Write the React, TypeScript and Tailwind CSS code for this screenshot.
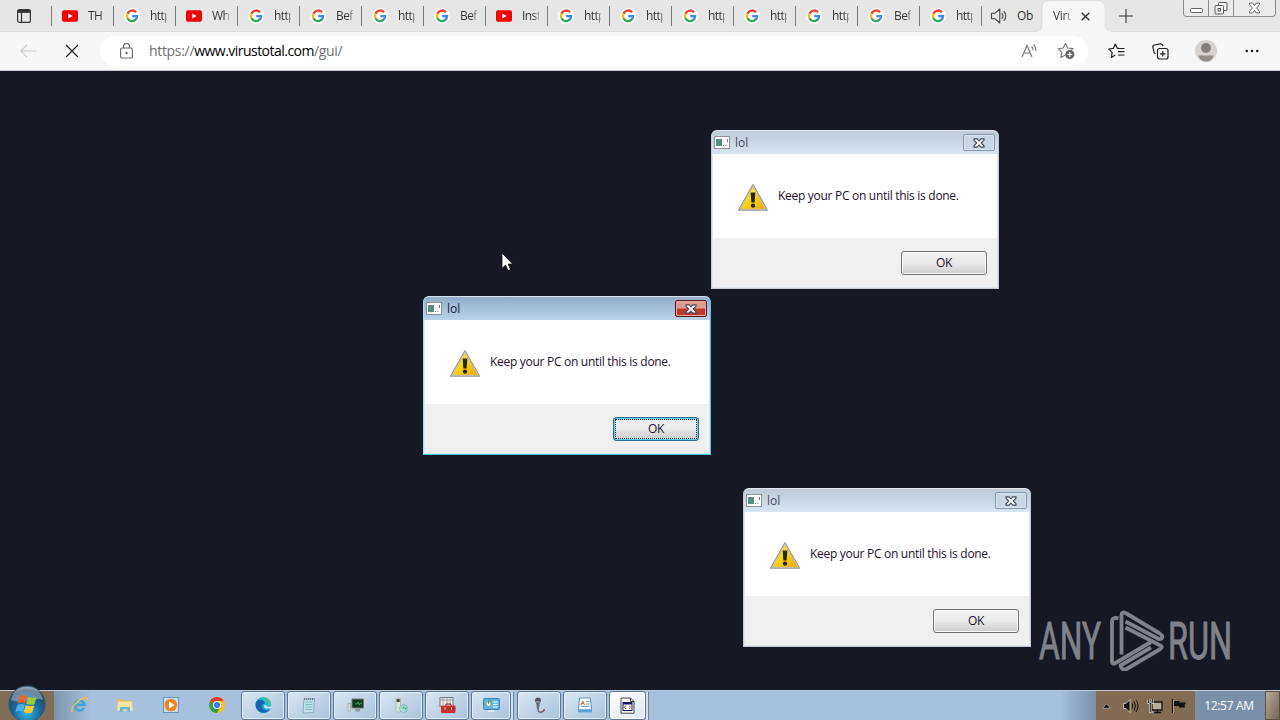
import React from "react";

function GoogleIcon() {
  return (
    <svg width="16" height="16" viewBox="0 0 16 16" className="block shrink-0">
      <circle cx="8" cy="8" r="8" fill="#fff" />
      <g fill="none" strokeWidth="2.3">
        <path d="M12.1 4.3A5.1 5.1 0 0 0 3.5 5.7" stroke="#ea4335" />
        <path d="M3.5 5.6A5.1 5.1 0 0 0 3.5 10.5" stroke="#fbbc05" />
        <path d="M3.5 10.3A5.1 5.1 0 0 0 11.6 11.7" stroke="#34a853" />
        <path d="M11.4 11.9A5.1 5.1 0 0 0 13.1 8.2H8.2" stroke="#4285f4" />
      </g>
    </svg>
  );
}

function YouTubeIcon() {
  return (
    <svg width="16" height="16" viewBox="0 0 16 16" className="block shrink-0">
      <rect x="0" y="2.3" width="16" height="11.4" rx="2" fill="#f50000" />
      <path d="M6.3 5.5v5L10.8 8z" fill="#fff" />
    </svg>
  );
}

function SpeakerIcon() {
  return (
    <svg width="18" height="18" viewBox="0 0 18 18" fill="none" stroke="#444" strokeWidth="1.1" className="block shrink-0">
      <path d="M1.5 6.2h3.6L9.8 2v14l-4.700-4.200H1.500z" strokeLinejoin="round" />
      <path d="M12 6.500a4 4 0 0 1 0 5M14 4.500a6.500 6.500 0 0 1 0 9" strokeLinecap="round" />
    </svg>
  );
}

const tabs: { icon: "yt" | "g"; text: string }[] = [
  { icon: "yt", text: "TH" },
  { icon: "g", text: "http" },
  { icon: "yt", text: "Wh" },
  { icon: "g", text: "http" },
  { icon: "g", text: "Bef" },
  { icon: "g", text: "http" },
  { icon: "g", text: "Bef" },
  { icon: "yt", text: "Inst" },
  { icon: "g", text: "http" },
  { icon: "g", text: "http" },
  { icon: "g", text: "http" },
  { icon: "g", text: "http" },
  { icon: "g", text: "http" },
  { icon: "g", text: "Bef" },
  { icon: "g", text: "http" },
];

function TabStrip() {
  return (
    <div className="flex h-8 shrink-0 items-start border-b border-[#dcdcdc] bg-[#e6e6e6] text-[12px] text-[#333]">
      <div className="flex h-8 w-[51px] shrink-0 items-center pl-[17px]">
        <svg width="14" height="14" viewBox="0 0 14 14" fill="none" stroke="#333" strokeWidth="1.200">
          <rect x=".6" y=".6" width="12.800" height="12.800" rx="2" />
          <path d="M.6 2.400h12.800" strokeWidth="3" />
          <path d="M4.500 3v10" />
        </svg>
      </div>
      {tabs.map((t, i) => (
        <div key={i} className="flex h-8 w-[62px] shrink-0 items-center">
          <div className="h-5 w-px bg-[#7c7c7c]" />
          <div className="ml-[10px]">{t.icon === "yt" ? <YouTubeIcon /> : <GoogleIcon />}</div>
          <div className="ml-[10px] w-[17px] overflow-hidden whitespace-nowrap bg-linear-to-r from-[#333] from-70% to-[#aaa] bg-clip-text leading-5 tracking-[-0.6px] text-transparent">
            {t.text}
          </div>
        </div>
      ))}
      <div className="flex h-8 w-[61px] shrink-0 items-center">
        <div className="h-5 w-px bg-[#7c7c7c]" />
        <div className="ml-[8px]"><SpeakerIcon /></div>
        <div className="ml-[9px] w-[17px] overflow-hidden whitespace-nowrap leading-5 tracking-[-0.3px]">Ob</div>
      </div>
      <div className="relative h-8 w-[64px] shrink-0">
        <svg width="78" height="32" viewBox="0 0 78 32" className="absolute -left-[7px] top-0">
          <path d="M0 32C5 32 7 29 7 25V8C7 3 10 .5 15 .5H62C67 .5 70 3 70 8v17C70 29 72 32 78 32z" fill="#f7f7f7" stroke="#d8d8d8" strokeWidth=".7" />
          <path d="M2 31.700H76" stroke="#f7f7f7" />
        </svg>
        <div className="relative flex h-8 items-center pl-[11px]">
          <div className="w-[18px] overflow-hidden whitespace-nowrap bg-linear-to-r from-[#333] from-60% to-[#bbb] bg-clip-text leading-5 tracking-[-0.4px] text-transparent">
            Viru
          </div>
          <svg width="9" height="9" viewBox="0 0 9 9" className="ml-[10px]" stroke="#333" strokeWidth="1.400">
            <path d="M.7.7l7.600 7.600M8.300.7.7 8.300" />
          </svg>
        </div>
      </div>
      <div className="flex h-8 w-[77px] shrink-0 items-center pl-[13px]">
        <svg width="14" height="14" viewBox="0 0 14 14" stroke="#333" strokeWidth="1.100">
          <path d="M7 0v14M0 7h14" />
        </svg>
      </div>
      <div className="flex h-[17px] w-[93px] shrink-0 rounded-b-[4px] border border-t-0 border-[#8c8c8c] bg-[#ebebeb]">
        <div className="flex w-[25px] justify-center border-r border-[#8c8c8c]">
          <svg width="13" height="16" viewBox="0 0 13 16"><rect x=".6" y="8.500" width="11.800" height="4" rx="1" fill="#fff" stroke="#666" /></svg>
        </div>
        <div className="flex w-[25px] justify-center border-r border-[#8c8c8c]">
          <svg width="14" height="16" viewBox="0 0 14 16" fill="#f8f8f8" stroke="#555">
            <rect x="4.500" y="2.500" width="8.500" height="8" rx="1" />
            <rect x="1" y="5.500" width="8.500" height="8.500" rx="1" />
            <rect x="4" y="8.500" width="2.500" height="2.500" />
          </svg>
        </div>
        <div className="flex flex-1 justify-center">
          <svg width="13" height="16" viewBox="0 0 13 16"><path d="M1.500 3h3l2 2.500 2-2.500h3v1.500L8.700 8l2.800 3.500V13h-3l-2-2.500-2 2.500h-3v-1.500L4.300 8 1.500 4.500z" fill="#fff" stroke="#666" /></svg>
        </div>
      </div>
    </div>
  );
}

function Toolbar() {
  return (
    <div className="flex h-[39px] shrink-0 items-center border-b border-[#c6c8cb] bg-[#f7f7f7]">
      <div className="w-[45px] pl-5">
        <svg width="17" height="14" viewBox="0 0 17 14" fill="none" stroke="#cbcbcb" strokeWidth="1.200"><path d="M7 .8.8 7 7 13.200M1 7h15.500" /></svg>
      </div>
      <div className="w-[55px] pl-[20px]">
        <svg width="14" height="14" viewBox="0 0 14 14" stroke="#222" strokeWidth="1.200"><path d="M1 1l12 12M13 1 1 13" /></svg>
      </div>
      <div className="flex h-[30px] w-[988px] items-center rounded-full bg-white pl-[20px]">
        <svg width="13" height="16" viewBox="0 0 13 16" fill="none" stroke="#666" strokeWidth="1.100" className="-mt-px">
          <rect x=".6" y="5" width="11.800" height="10" rx="1.500" />
          <path d="M3.500 5V3.500a3 3 0 0 1 6 0V5" />
          <circle cx="6.500" cy="10" r=".6" fill="#666" />
        </svg>
        <div className="ml-4 w-[860px] whitespace-nowrap text-[14px] leading-5 tracking-[-0.32px] text-[#707070]">
          https://<span className="tracking-[-0.53px] text-black">www.virustotal.com</span>/gui/
        </div>
        <svg width="18" height="16" viewBox="0 0 18 16" fill="none" stroke="#777" strokeWidth="1.100" className="ml-[12px]">
          <path d="M1 14 6 2.500 11 14M3 10h6M10.500 3.500a4 4 0 0 1 1.500 4M12.500 1.500a7 7 0 0 1 2 6.500" />
        </svg>
        <svg width="19" height="18" viewBox="0 0 19 18" fill="none" stroke="#777" strokeWidth="1.100" className="ml-[18px]">
          <path d="M8.500 1.300 10.500 6l5.600.6-4.200 3.700M8.500 1.300 6.200 6 1 6.700l3.800 3.600-1 5.200 4.300-2.300" strokeLinejoin="round" />
          <circle cx="12.800" cy="12.500" r="4.600" fill="#666" stroke="none" />
          <path d="M12.800 10v5M10.300 12.500h5" stroke="#fff" />
        </svg>
      </div>
      <div className="flex items-center">
        <svg width="17" height="16" viewBox="0 0 17 16" fill="none" stroke="#222" strokeWidth="1.200" className="ml-[20px]">
          <path d="M11 5.400 9.300 5.300 7.300 1 5.300 5.400.8 6l3.300 3.300L3.400 14.500 7.300 12M10 5.500h6.500M10 8.700h6.500M10 12h6.500" strokeLinejoin="round" />
        </svg>
        <svg width="17" height="17" viewBox="0 0 17 17" fill="none" stroke="#222" strokeWidth="1.200" className="ml-[27px]">
          <path d="M3.500 11 2.200 9.800.9 4.300C.5 3 1 2.400 2.200 2L8.300.9C9.800.6 10.600 1.300 11 3" />
          <rect x="5.500" y="5.500" width="10.500" height="10.500" rx="2" />
          <path d="M10.800 8v5.500M8 10.800h5.500" />
        </svg>
        <svg width="22" height="22" viewBox="0 0 22 22" className="ml-[26px]">
          <circle cx="11" cy="11" r="11" fill="#d5d2cf" />
          <circle cx="11" cy="8" r="5" fill="#85807d" />
          <path d="M3.500 15.500h15c-1 4-4 6-7.500 6s-6.500-2-7.500-6z" fill="#918d89" />
        </svg>
        <svg width="14" height="4" viewBox="0 0 14 4" fill="#222" className="ml-[28px]"><circle cx="1.800" cy="2" r="1.300" /><circle cx="7" cy="2" r="1.300" /><circle cx="12.200" cy="2" r="1.300" /></svg>
      </div>
    </div>
  );
}

function WarningIcon() {
  return (
    <svg width="32" height="29" viewBox="0 0 32 29" className="block shrink-0">
      <defs>
        <linearGradient id="warn" x1="0" y1="0" x2="1" y2="1">
          <stop offset="0" stopColor="#fff26a" /><stop offset=".5" stopColor="#f5d414" /><stop offset="1" stopColor="#f3a80c" />
        </linearGradient>
      </defs>
      <path d="M16 1.500 30.500 27.200h-29z" fill="#d8d8d8" stroke="#9b9b9b" strokeWidth="1.200" strokeLinejoin="round" />
      <path d="M16 4 28.300 25.800H3.700z" fill="url(#warn)" stroke="#e0b020" strokeWidth=".5" />
      <path d="M13.700 9.500h4.600l-.7 10h-3.200z" fill="#222" />
      <circle cx="16" cy="22.700" r="2.100" fill="#222" />
    </svg>
  );
}

function MessageBox({ place, active = false }: { place: string; active?: boolean }) {
  return (
    <div
      className={`absolute flex h-[159px] w-[288px] flex-col rounded-t-[6px] border px-px pb-px ${
        active
          ? "border-t-[#d5e3ee] border-r-[#45c3d8] border-b-[#45c3d8] border-l-[#9ddfea] bg-[#d3edf5]"
          : "border-t-[#e4e9ee] border-r-[#c3c9d0] border-b-[#c3c9d0] border-l-[#c3c9d0] bg-[#e1e7ee]"
      } ${place}`}
    >
      <div
        className={`-mx-px flex h-[23px] shrink-0 items-center rounded-t-[5px] pl-[2px] text-[12px] ${
          active ? "bg-linear-to-b from-[#94aecb] to-[#b9d1ea] text-[#1d1a45]" : "bg-linear-to-b from-[#c0cbd7] to-[#d7e4f2] text-[#4b4b5c]"
        }`}
      >
        <svg width="16" height="13" viewBox="0 0 16 13" className="-mt-px">
          <rect x=".5" y=".5" width="15" height="12" fill="#fff" stroke="#8c9296" />
          <rect x="2" y="3" width="6" height="7" fill="#528f85" />
          <path d="M9 9.500h1M11.500 9.500h1M13.500 3v3" stroke="#777" />
        </svg>
        <span className="ml-[5px] flex-1 leading-4">lol</span>
        <div
          className={`mr-[3px] flex h-[17px] w-[32px] items-center justify-center rounded-[2px] border ${
            active
              ? "border-[#5b1b1b] bg-linear-to-b from-[#dc9c90] from-45% to-[#bb392b] to-55% shadow-[inset_0_0_0_1px_#e6a79e]"
              : "border-[#8397ad] bg-[#c9d7e5] shadow-[inset_0_0_0_1px_#d9e4ee]"
          }`}
        >
          <svg width="12" height="10" viewBox="0 0 13 11">
            <path d="M1 1h3.500l2 2.300 2-2.300H12v1.400L9 5.500l3 3.100V10H8.500l-2-2.300-2 2.300H1V8.600l3-3.100-3-3.100z" fill="#fff" stroke="#454857" strokeWidth="1.200" />
          </svg>
        </div>
      </div>
      <div className="flex h-[84px] shrink-0 items-center bg-white pl-[24px]">
        <div className="mt-[2px]"><WarningIcon /></div>
        <div className="ml-[9px] whitespace-nowrap text-[12px] leading-4 tracking-[-0.29px] text-[#24102c]">Keep your PC on until this is done.</div>
      </div>
      <div className="flex flex-1 items-start justify-end bg-[#f0f0f0] pr-[10px] pt-[13px]">
        <div
          className={`flex h-[24px] w-[86px] rounded-[3px] border p-px ${
            active ? "border-[#2f6d93] bg-[#62cdec]" : "border-[#707070] bg-[#fbfbfb]"
          }`}
        >
          <div
            className={`flex flex-1 items-center justify-center bg-linear-to-b from-[#f1f1f1] via-[#e9e9e9] to-[#cfcfcf] text-[12px] leading-4 tracking-[-0.4px] text-[#24102c] ${
              active ? "border border-dotted border-[#222]" : ""
            }`}
          >
            OK
          </div>
        </div>
      </div>
    </div>
  );
}

function StartOrb() {
  return (
    <svg width="40" height="36" viewBox="0 0 40 36" className="absolute -top-[6px] left-[7px]">
      <defs>
        <radialGradient id="orb" cx=".5" cy=".75" r=".75">
          <stop offset="0" stopColor="#36b6e4" /><stop offset=".5" stopColor="#17699c" /><stop offset=".85" stopColor="#28475f" /><stop offset="1" stopColor="#92a9b9" />
        </radialGradient>
      </defs>
      <circle cx="20" cy="19" r="18" fill="url(#orb)" stroke="#32556d" />
      <path d="M4 15C6 5 13 2 20 2s14 3 16 13c-9-4-20 5-32 0z" fill="#c2d3dd" opacity=".45" />
      <path d="M12.500 11.500c3-1.800 5.500-1.200 7.500-.2l-2 7.200c-2.500-1.200-5-1.300-7.500.2z" fill="#ef642f" />
      <path d="M21 11.700c3 1.500 5.500 1.500 8.500.2l-2 7c-3 1.500-5.500 1-8.300-.2z" fill="#9dca3c" />
      <path d="M10.200 20c3-1.600 5.200-1.300 7.500-.2l-2 7c-2.500-1.200-4.700-1.200-7.300.3z" fill="#4cb2ee" />
      <path d="M18.900 20.200c3 1.400 5.200 1.300 8.300.2l-2 6.800c-3 1.500-5.500 1.200-8.300-.2z" fill="#fccb35" />
    </svg>
  );
}

function IEIcon() {
  return (
    <svg width="18" height="18" viewBox="0 0 18 18" fill="none">
      <path d="M14 12a5 5 0 1 1 .6-3.200H5" stroke="#3fa4dc" strokeWidth="2.500" />
      <path d="M2.500 16C-1 13 9 2.500 15.500 1.500c1.700-.2 1.700 1.300 1 3" stroke="#edc34a" strokeWidth="1.500" />
    </svg>
  );
}
function FolderIcon() {
  return (
    <svg width="18" height="16" viewBox="0 0 18 16">
      <path d="M1 2h6l1 1.500h8V13H2z" fill="#d9bd62" />
      <path d="M2 4.500h14l1 9H1z" fill="#f4e49c" />
      <path d="M4 15v-5h10v5h-2.500v-2.500h-5V15z" fill="#6bb3d0" />
    </svg>
  );
}
function PlayerIcon() {
  return (
    <svg width="16" height="16" viewBox="0 0 16 16">
      <rect x=".5" y=".5" width="15" height="15" fill="#c8dff0" stroke="#6698c0" />
      <circle cx="7.800" cy="8" r="6.300" fill="#f18718" />
      <path d="M6 4.300v7.400L11.500 8z" fill="#fff" />
    </svg>
  );
}
function ChromeIcon() {
  return (
    <svg width="16" height="16" viewBox="0 0 16 16">
      <circle cx="8" cy="8" r="8" fill="#fbc116" />
      <path d="M8 8 1.100 4A8 8 0 0 1 14.900 4H8z" fill="#e33b2e" />
      <path d="M8 8 1.100 4A8 8 0 0 0 8 16l3.500-6z" fill="#2fa24c" />
      <circle cx="8" cy="8" r="4" fill="#fff" /><circle cx="8" cy="8" r="3.100" fill="#3d7de8" />
    </svg>
  );
}
function EdgeIcon() {
  return (
    <svg width="17" height="16" viewBox="0 0 17 16">
      <defs><linearGradient id="edge" x1="0" y1="1" x2="1" y2="0"><stop offset="0" stopColor="#148fd7" /><stop offset=".6" stopColor="#28b8d1" /><stop offset="1" stopColor="#60d158" /></linearGradient></defs>
      <circle cx="8.500" cy="8" r="8" fill="url(#edge)" />
      <path d="M1 5c3-4 9-2 9 2-3-1-5 4 0 6 2 .8 4 .3 5.500-.7C13 16 7 17 3.500 14 .5 11.500.2 8 1 5z" fill="#1266b3" />
      <path d="M10 7.500C8 9 9 11.500 12 11.500h4L17 8c-1.500 2.500-5 2.500-7-.5z" fill="#c7dff1" />
    </svg>
  );
}
function NotepadIcon() {
  return (
    <svg width="16" height="17" viewBox="0 0 16 17">
      <path d="M3 2h10.500l-.8 13.500L2 16z" fill="#bfe3e9" stroke="#719ba6" strokeWidth=".7" />
      <path d="M3 2h10.500" stroke="#555" strokeWidth="1.500" strokeDasharray="1 1" />
      <path d="M4.500 5h7M4.400 7.500h7M4.300 10h7M4.200 12.500h7" stroke="#69b1bf" strokeWidth=".8" />
    </svg>
  );
}
function MonitorIcon() {
  return (
    <svg width="17" height="16" viewBox="0 0 17 16">
      <rect x="1" y="6.500" width="2.500" height="7.500" fill="#dfe5df" stroke="#8f9c92" strokeWidth=".7" />
      <rect x="5" y="2" width="11.500" height="9" fill="#163c20" stroke="#777" />
      <path d="M8 7h2l1-2 1.500 3 1-2H15" stroke="#55b95c" strokeWidth=".8" fill="none" />
      <path d="M9 12h4v2.500H7.500z" fill="#8ca08e" />
    </svg>
  );
}
function PhoneIcon() {
  return (
    <svg width="16" height="17" viewBox="0 0 16 17">
      <rect x="3" y="1" width="4.500" height="14" rx="1" fill="#dce4d8" stroke="#a3afa0" strokeWidth=".7" />
      <path d="M3.700 2h3v3h-3z" fill="#384738" />
      <circle cx="10.500" cy="11.500" r="4" fill="#a9dae0" stroke="#75a9b3" strokeWidth=".7" />
      <path d="m9 11.500 2-3v2h3l-2 3v-2z" fill="#43b45e" />
    </svg>
  );
}
function ToolboxIcon() {
  return (
    <svg width="17" height="17" viewBox="0 0 17 17">
      <rect x="1" y=".5" width="13" height="9" fill="#eee" stroke="#777" />
      <path d="M1 3h13M4 0v8M8 0v8M11 0v8" stroke="#888" strokeWidth=".7" />
      <path d="M7 9V7h5v2" fill="none" stroke="#8c1e1a" />
      <rect x="2" y="8.500" width="14.500" height="7.500" rx="1" fill="#cb302b" />
      <path d="M2 11.500h14.500" stroke="#8d2421" strokeWidth=".6" /><path d="M6 10.500v2M12.500 10.500v2" stroke="#fff" />
    </svg>
  );
}
function ControlPanelIcon() {
  return (
    <svg width="17" height="16" viewBox="0 0 17 16">
      <rect x=".6" y="1.600" width="15.800" height="10.800" rx="1" fill="#64b6ea" stroke="#317eaf" />
      <circle cx="5.500" cy="6.800" r="2.800" fill="#eaf7d5" stroke="#55a48d" /><path d="M5.500 6.800V4h2.800" stroke="#548f3b" fill="none" />
      <path d="M10 5h4.500M10 7.500h4.500M10 10h4.500" stroke="#fff" /><path d="M6 13h5v2H4.500z" fill="#e0e9ef" />
    </svg>
  );
}
function MicIcon() {
  return (
    <svg width="15" height="17" viewBox="0 0 15 17">
      <path d="M6 5v8c0 3 5 3 6 0" fill="none" stroke="#6f6768" strokeWidth="1.300" />
      <path d="M4 5h4l-1 7H5z" fill="#6a6a74" /><circle cx="6" cy="3.500" r="3" fill="#555560" /><path d="M3.500 5h5" stroke="#bbb" /><circle cx="12" cy="13" r="1" fill="#aa4946" />
    </svg>
  );
}
function DocumentIcon() {
  return (
    <svg width="16" height="16" viewBox="0 0 16 16">
      <path d="M2.500 1h11l1 12h-13z" fill="#f7fbff" stroke="#5795c6" /><path d="M1 12.500h14v3H1z" fill="#5da2d5" />
      <path d="m4 8 1.700-4L7.500 8M4.700 6.500h2" stroke="#d16a35" fill="none" />
      <path d="M9 4.500h3.500M9 7H12.500M4 9.500h8.500" stroke="#73a7cf" />
    </svg>
  );
}
function ScriptIcon() {
  return (
    <svg width="15" height="17" viewBox="0 0 15 17">
      <path d="M1 1h9.500L14 4.500v11.700H1z" fill="#fff" stroke="#444" /><path d="M10.500 1v3.500H14" fill="none" stroke="#444" />
      <rect x="3" y="5.500" width="9" height="8" fill="#fff" stroke="#181861" /><path d="M3 6.500h9" stroke="#181861" strokeWidth="2" />
      <path d="m6 8.500-1.500 1.700L6 12" fill="none" stroke="#286534" /><path d="m9 8.500 1.500 1.700L9 12" fill="none" stroke="#c23535" />
    </svg>
  );
}

const pinned = [IEIcon, FolderIcon, PlayerIcon, ChromeIcon];
const running = [EdgeIcon, NotepadIcon, MonitorIcon, PhoneIcon, ToolboxIcon, ControlPanelIcon, MicIcon, DocumentIcon];

function Taskbar() {
  return (
    <div className="flex h-[30px] shrink-0 items-stretch border-t border-[#bfcad6] bg-[#a6c0de]">
      <div className="relative w-[54px] shrink-0 bg-[#816e59]"><StartOrb /></div>
      <div className="flex w-[187px] shrink-0 bg-linear-to-r from-[#7f95ad] to-[#a6c0de] to-20% pb-px pl-[2px]">
        {pinned.map((Icon, i) => (
          <div key={i} className="flex w-[46px] shrink-0 items-center justify-center"><Icon /></div>
        ))}
      </div>
      <div className="flex shrink-0">
        {running.map((Icon, i) => (
          <div
            key={i}
            className={`flex shrink-0 items-center justify-center rounded-[3px] border border-[#5f7993] bg-linear-to-br from-[#dbe7f3] to-[#a9c2dc] pb-px shadow-[inset_0_0_0_1px_#e2edf7] ${
              i === 5
                ? "relative mr-[6px] w-[40px] after:absolute after:-right-[4px] after:top-0 after:h-[28px] after:w-[3px] after:border-r after:border-[#6b849e] after:bg-[#d2e0ee] after:content-['']"
                : "mr-[2px] w-[44px]"
            }`}
          >
            <Icon />
          </div>
        ))}
        <div className="relative flex w-[37px] shrink-0 items-center justify-center rounded-[3px] border border-[#5f7993] bg-linear-to-br from-white to-[#dae7f3] pb-px shadow-[inset_0_0_0_1px_#fff] after:absolute after:-right-[4px] after:top-0 after:h-[28px] after:w-[3px] after:border-r after:border-[#6b849e] after:bg-[#d2e0ee] after:content-['']">
          <ScriptIcon />
        </div>
      </div>
      <div className="flex-1 bg-linear-to-r from-[#a6c0de] from-92% to-[#7b90a8]" />
      <div className="flex w-[99px] shrink-0 items-center bg-[#816b53] pl-[6px]">
        <svg width="9" height="6" viewBox="0 0 8 5"><path d="m4 .5 3.500 4h-7z" fill="#111" stroke="#c9c0b4" strokeWidth=".6" /></svg>
        <svg width="17" height="16" viewBox="0 0 17 16" className="ml-[11px]">
          <path d="M1.500 5.500H4L8 1.500v13l-4-4H1.500z" fill="#111" stroke="#ded8cf" strokeWidth=".8" />
          <path d="M10 5.500q1.500 2.500 0 5M12 3.500q3 4.500 0 9M14 2q4 6 0 12" stroke="#111" fill="none" />
        </svg>
        <svg width="17" height="16" viewBox="0 0 17 16" className="ml-[8px]">
          <path d="M5 4h10v8H5z" fill="#b7aa98" stroke="#171511" strokeWidth="1.300" />
          <path d="M7 14.500h7M10.500 12v3" stroke="#171511" strokeWidth="1.300" />
          <path d="M1.500 1v4h4V1M3.500 5v9H7" fill="none" stroke="#eee8df" strokeWidth="2" />
          <path d="M1.500 1v4h4V1M3.500 5v9H7" fill="none" stroke="#171511" strokeWidth=".8" />
        </svg>
        <svg width="16" height="16" viewBox="0 0 16 16" className="ml-[7px]" fill="#111">
          <path d="M1.500 1v14" stroke="#111" strokeWidth="1.200" /><path d="M3 3h5.500v1.500H15L13.500 7l.5 2.500H8V8H3z" /><path d="M2.500 2v13" stroke="#d8d0c5" strokeWidth=".6" />
        </svg>
      </div>
      <div className="flex w-[70px] shrink-0 items-center justify-center whitespace-nowrap bg-[#7b90a8] pr-[2px] text-[12px] tracking-[-0.3px] text-white">12:57 AM</div>
      <div className="w-[15px] shrink-0 border border-[#5b4e43] bg-linear-to-br from-[#b6aa9c] to-[#77654f]" />
    </div>
  );
}

function Watermark() {
  return (
    <svg width="194" height="64" viewBox="0 0 194 64" className="absolute left-[1038px] top-[536px]">
      <g fill="#80828b" stroke="#80828b" strokeWidth=".9" fontFamily="Roboto, sans-serif" fontSize="51">
        <text x="1" y="52" textLength="62" lengthAdjust="spacingAndGlyphs">ANY</text>
        <text x="130" y="52" textLength="64" lengthAdjust="spacingAndGlyphs">RUN</text>
      </g>
      <g fill="none" stroke="#80828b" strokeWidth="3.800" strokeLinejoin="round">
        <path d="M80.500 11.500Q74 9.500 74 15V54.500Q74 58 77.500 56L113 35" />
        <path d="M83.500 47.500V8.500Q83.500 4 87.500 6L121 26Q126 29.500 123.500 31.500Q121.500 33 119 31L87.500 14.500" />
        <path d="M87.500 20.500 121.500 38Q126 40 121.500 42.500L88.500 62Q84 64 82.500 58.500L113 40.500" />
      </g>
    </svg>
  );
}

export default function App() {
  return (
    <div className="flex h-[720px] w-[1280px] flex-col overflow-hidden bg-[#161824] font-['Open_Sans','Noto_Sans',sans-serif]">
      <TabStrip />
      <Toolbar />
      <main className="relative h-[619px] shrink-0 bg-[#161824]">
        <MessageBox place="left-[711px] top-[59px]" />
        <MessageBox place="left-[423px] top-[225px]" active />
        <MessageBox place="left-[743px] top-[417px]" />
        <Watermark />
        <svg width="12" height="20" viewBox="0 0 12 20" className="absolute left-[501px] top-[181px]">
          <path d="M1 1v15.500l3.600-3.400 2.400 5.600 2.600-1.100-2.400-5.500h4.500z" fill="#fff" stroke="#0b0c12" strokeWidth=".8" />
        </svg>
      </main>
      <Taskbar />
    </div>
  );
}
